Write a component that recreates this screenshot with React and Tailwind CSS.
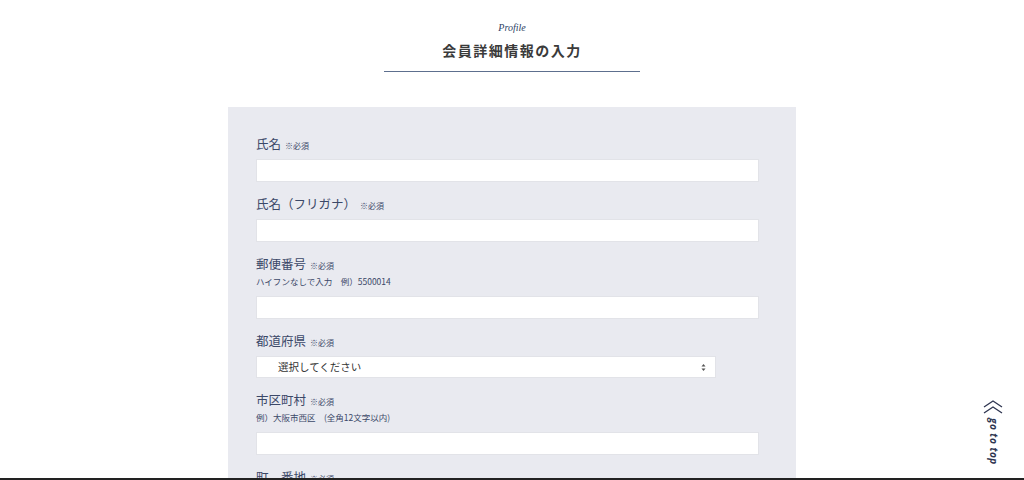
import React from "react";

const jp = { fontFamily: '"Noto Sans CJK JP", "Noto Sans", sans-serif' };

function Label({ text }) {
  return (
    <div className="flex items-baseline h-[18px] leading-[18px]">
      <span className="text-[12.5px] text-[#3b4868]">{text}</span>
      <span className="ml-[4px] text-[8px] text-[#3b4868]">※必須</span>
    </div>
  );
}

function Field({ label, sub, select }) {
  return (
    <div className="flex flex-col">
      <Label text={label} />
      {sub ? (
        <div className="text-[8.5px] leading-[14px] mt-[1px] text-[#3b4868]">{sub}</div>
      ) : null}
      <div className={sub ? "mt-[8px]" : "mt-[6px]"}>
        {select ? (
          <div className="w-[460px] h-[22px] bg-white border border-[#e2e3e8] flex items-center justify-between pl-[21px] pr-[9px]">
            <span className="text-[10.5px] text-[#333]">選択してください</span>
            <svg width="5" height="9" viewBox="0 0 5 9">
              <path d="M0.5 3.5 L2.5 1 L4.5 3.5 Z" fill="#555" />
              <path d="M0.5 5.5 L2.5 8 L4.5 5.5 Z" fill="#555" />
            </svg>
          </div>
        ) : (
          <div className="w-[503px] h-[23px] bg-white border border-[#e2e3e8]" />
        )}
      </div>
    </div>
  );
}

export default function App() {
  return (
    <div className="h-[480px] overflow-hidden bg-white flex flex-col relative" style={jp}>
      <div className="flex flex-col items-center pt-[21px]">
        <div
          className="text-[10px] italic text-[#2e3f66] leading-[14px]"
          style={{ fontFamily: '"Liberation Serif", serif' }}
        >
          Profile
        </div>
        <div className="mt-[5px] text-[14px] font-bold text-[#3a3a3a] tracking-[1.5px] leading-[20px]">
          会員詳細情報の入力
        </div>
        <div className="mt-[11px] w-[256px] h-px bg-[#5d6f8e]" />
      </div>
      <div className="mt-[35px] mx-auto w-[568px] bg-[#e9eaf0] pl-[28px] pt-[28px] flex flex-col gap-[13px] flex-1">
        <Field label="氏名" />
        <Field label="氏名（フリガナ）" />
        <Field label="郵便番号" sub="ハイフンなしで入力　例）5500014" />
        <Field label="都道府県" select />
        <Field label="市区町村" sub="例）大阪市西区　(全角12文字以内)" />
        <Field label="町　番地" />
      </div>
      <div className="absolute right-[20px] top-[400px] flex flex-col items-center text-[#2e3550]">
        <svg width="22" height="14" viewBox="0 0 22 14" fill="none" stroke="#2e3550" strokeWidth="1.3">
          <path d="M2 7 L11 1 L20 7" />
          <path d="M2 13 L11 7 L20 13" />
        </svg>
        <div
          className="mt-[4px] text-[10px] font-bold italic tracking-[0.5px] [writing-mode:vertical-rl]"
          style={{ fontFamily: '"Open Sans", sans-serif' }}
        >
          go to top
        </div>
      </div>
      <div className="absolute left-0 right-0 bottom-0 h-[2px] bg-[#222]" />
    </div>
  );
}
